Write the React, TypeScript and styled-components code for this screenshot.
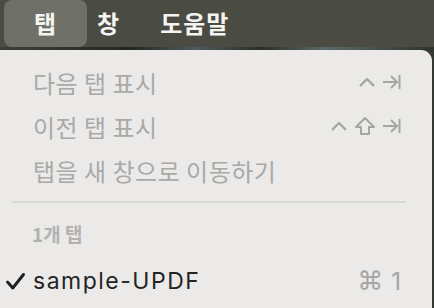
import styled, { createGlobalStyle } from "styled-components";

const GlobalStyle = createGlobalStyle`
  html, body {
    margin: 0;
    padding: 0;
    background: #343a33;
  }
  body {
    width: 434px;
    height: 308px;
    overflow: hidden;
    font-family: "Noto Sans CJK KR", "Inter", sans-serif;
  }
`;

const Screen = styled.div`
  width: 434px;
  height: 308px;
  display: flex;
  flex-direction: column;
`;

const MenuBar = styled.div`
  height: 47px;
  background: #4a4b42;
  display: flex;
  align-items: stretch;
  padding-left: 4px;
`;

const BarItem = styled.div<{ $active?: boolean }>`
  display: flex;
  align-items: center;
  justify-content: center;
  padding: 0 ${(p) => (p.$active ? "30px" : "20px")} 2px;
  margin-right: ${(p) => (p.$active ? "-10px" : "0")};
  border-radius: 8px;
  background: ${(p) => (p.$active ? "#6f7067" : "transparent")};
  color: #f4f4f0;
  font-family: "Noto Sans CJK KR", sans-serif;
  font-weight: 700;
  font-size: 24px;
  letter-spacing: 1px;
`;

const Wallpaper = styled.div`
  height: 3px;
  background: linear-gradient(90deg, #3b4038 0%, #22281f 30%, #4d5b60 45%, #2a2f27 60%, #5a6a6a 75%, #2e342c 100%);
`;

const Menu = styled.div`
  flex: 1;
  margin-right: 2px;
  background: #ebeae8;
  border-top-right-radius: 11px;
  padding: 10px 31px 0 0;
  display: flex;
  flex-direction: column;
`;

const Row = styled.div<{ $height?: number }>`
  height: ${(p) => p.$height ?? 44}px;
  display: flex;
  align-items: center;
`;

const Check = styled.div`
  width: 33px;
  display: flex;
  justify-content: center;
  padding-right: 3px;
  box-sizing: border-box;
`;

const Label = styled.span<{ $enabled?: boolean }>`
  flex: 1;
  font-family: ${(p) => (p.$enabled ? `"Inter", "Noto Sans CJK KR", sans-serif` : `"Noto Sans CJK KR", sans-serif`)};
  font-size: ${(p) => (p.$enabled ? "23px" : "24px")};
  color: ${(p) => (p.$enabled ? "#242424" : "#a9a9a8")};
  letter-spacing: ${(p) => (p.$enabled ? "1.5px" : "0.5px")};
  white-space: nowrap;
`;

const Header = styled.span`
  margin: 5px 0 0 32px;
  font-family: "Noto Sans CJK KR", sans-serif;
  font-weight: 700;
  font-size: 19px;
  color: #b1b1b0;
`;

const Separator = styled.div`
  height: 2px;
  background: #d8d8d6;
  margin: 9px 0 0 12px;
  width: 394px;
`;

const Shortcut = styled.span`
  display: flex;
  align-items: center;
  gap: 6px;
  color: #a5a5a4;
`;

const KeyText = styled.span`
  font-family: "DejaVu Sans", sans-serif;
  font-size: 26px;
  margin-right: 2px;
  color: #a5a5a4;
`;

const NumText = styled.span`
  font-family: "Inter", sans-serif;
  font-size: 24px;
  color: #a5a5a4;
`;

const Caret = () => (
  <svg width="18" height="12" viewBox="0 0 18 12">
    <path d="M2 10 L9 3 L16 10" fill="none" stroke="currentColor" strokeWidth="2.4" strokeLinejoin="round" />
  </svg>
);

const ShiftKey = () => (
  <svg width="22" height="20" viewBox="0 0 22 20">
    <path
      d="M11 2 L20 11 L15 11 L15 18 L7 18 L7 11 L2 11 Z"
      fill="none"
      stroke="currentColor"
      strokeWidth="2"
      strokeLinejoin="round"
    />
  </svg>
);

const TabKey = () => (
  <svg width="19" height="16" viewBox="0 0 19 16">
    <path d="M1 8 H15 M9 2 L15 8 L9 14 M17.5 1 V15" fill="none" stroke="currentColor" strokeWidth="2" />
  </svg>
);

const CheckMark = () => (
  <svg width="19" height="17" viewBox="0 0 19 17">
    <path d="M1.5 9 L6.8 15 L17.5 1.5" fill="none" stroke="#1f1f1f" strokeWidth="2.9" strokeLinecap="round" strokeLinejoin="round" />
  </svg>
);

export default function App() {
  return (
    <>
      <GlobalStyle />
      <Screen>
        <MenuBar>
          <BarItem $active>탭</BarItem>
          <BarItem>창</BarItem>
          <BarItem>도움말</BarItem>
        </MenuBar>
        <Wallpaper />
        <Menu>
          <Row>
            <Check />
            <Label>다음 탭 표시</Label>
            <Shortcut>
              <Caret />
              <TabKey />
            </Shortcut>
          </Row>
          <Row>
            <Check />
            <Label>이전 탭 표시</Label>
            <Shortcut>
              <Caret />
              <ShiftKey />
              <TabKey />
            </Shortcut>
          </Row>
          <Row>
            <Check />
            <Label>탭을 새 창으로 이동하기</Label>
          </Row>
          <Separator />
          <Row $height={56}>
            <Header>1개 탭</Header>
          </Row>
          <Row>
            <Check>
              <CheckMark />
            </Check>
            <Label $enabled>sample-UPDF</Label>
            <Shortcut>
              <KeyText>⌘</KeyText>
              <NumText>1</NumText>
            </Shortcut>
          </Row>
        </Menu>
      </Screen>
    </>
  );
}
